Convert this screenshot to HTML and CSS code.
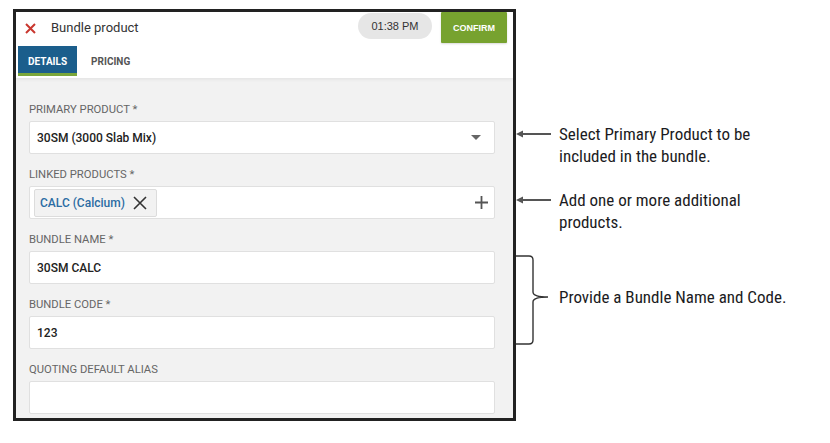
FILE: index.html
```html
<!DOCTYPE html>
<html lang="en">
<head>
<meta charset="utf-8">
<title>Bundle product</title>
<link rel="stylesheet" href="styles.css">
</head>
<body>
<div class="page">
  <div class="window">
    <header class="win-head">
      <div class="title-row">
        <svg class="close-icon" width="11" height="11" viewBox="0 0 11 11"><path d="M1 1 L10 10 M10 1 L1 10" stroke="#c9372f" stroke-width="2" fill="none"/></svg>
        <span class="title">Bundle product</span>
        <span class="time">01:38 PM</span>
        <button class="confirm">CONFIRM</button>
      </div>
      <nav class="tabs">
        <span class="tab active">DETAILS</span>
        <span class="tab">PRICING</span>
      </nav>
    </header>
    <main class="form">
      <div class="field">
        <div class="label">PRIMARY PRODUCT *</div>
        <div class="input select">
          <span class="value">30SM (3000 Slab Mix)</span>
          <svg class="caret" width="10" height="5" viewBox="0 0 10 5"><path d="M0 0 H10 L5 5 Z" fill="#666"/></svg>
        </div>
      </div>
      <div class="field">
        <div class="label">LINKED PRODUCTS *</div>
        <div class="input chips">
          <span class="chip">CALC (Calcium)
            <svg class="chip-x" width="14" height="14" viewBox="0 0 14 14"><path d="M1 1 L13 13 M13 1 L1 13" stroke="#333" stroke-width="1.6" fill="none"/></svg>
          </span>
          <svg class="plus" width="13" height="13" viewBox="0 0 13 13"><path d="M6.5 0 V13 M0 6.5 H13" stroke="#555" stroke-width="1.8" fill="none"/></svg>
        </div>
      </div>
      <div class="field">
        <div class="label">BUNDLE NAME *</div>
        <div class="input"><span class="value">30SM CALC</span></div>
      </div>
      <div class="field">
        <div class="label">BUNDLE CODE *</div>
        <div class="input"><span class="value">123</span></div>
      </div>
      <div class="field">
        <div class="label">QUOTING DEFAULT ALIAS</div>
        <div class="input"></div>
      </div>
    </main>
  </div>
  <aside class="notes">
    <div class="note">
      <svg class="arrow" width="35" height="22" viewBox="0 0 35 22"><path d="M5 11 H35" stroke="#555" stroke-width="2"/><path d="M0 11 L7 7.5 L7 14.5 Z" fill="#555"/></svg>
      <p class="note-text">Select Primary Product to be<br>included in the bundle.</p>
    </div>
    <div class="note">
      <svg class="arrow" width="35" height="22" viewBox="0 0 35 22"><path d="M5 11 H35" stroke="#555" stroke-width="2"/><path d="M0 11 L7 7.5 L7 14.5 Z" fill="#555"/></svg>
      <p class="note-text">Add one or more additional<br>products.</p>
    </div>
    <div class="note">
      <svg class="brace" width="35" height="90" viewBox="0 0 35 90"><path d="M0 1 H13 Q17 1 17 5 V37 Q17 42 32 42 Q17 42 17 47 V85 Q17 89 13 89 H0" stroke="#333" stroke-width="1.4" fill="none"/></svg>
      <p class="note-text brace-text">Provide a Bundle Name and Code.</p>
    </div>
  </aside>
</div>
</body>
</html>
```

FILE: styles.css
```css
html, body {
  margin: 0;
  background: #fff;
  font-family: Roboto, "Liberation Sans", sans-serif;
}

.page {
  display: flex;
  align-items: flex-start;
  padding: 9px 0 0 13px;
}

.window {
  width: 503px;
  height: 412px;
  box-sizing: border-box;
  border: 3px solid #222;
  background: #f2f2f2;
  display: flex;
  flex-direction: column;
  overflow: hidden;
}

.win-head {
  background: #fff;
  height: 66px;
  flex: none;
  box-shadow: 0 1px 4px rgba(0, 0, 0, 0.08);
  position: relative;
  z-index: 1;
}

.title-row {
  display: flex;
  align-items: flex-start;
  height: 34px;
  padding: 0 6px 0 9px;
}

.close-icon {
  margin-top: 11px;
  margin-right: 15px;
  flex: none;
}

.title {
  font-size: 13px;
  line-height: 16px;
  margin-top: 8px;
  color: #333;
}

.time {
  margin-left: auto;
  margin-top: 1px;
  margin-right: 9px;
  width: 74px;
  height: 26px;
  border-radius: 13px;
  background: #e6e6e6;
  color: #333;
  font-family: "Liberation Sans", Arial, sans-serif;
  font-size: 11px;
  display: flex;
  align-items: center;
  justify-content: center;
}

.confirm {
  width: 66px;
  height: 31px;
  border: none;
  border-radius: 1px;
  background: #77a22f;
  color: #fff;
  font-family: "Liberation Sans", Arial, sans-serif;
  font-weight: bold;
  font-size: 9px;
  padding: 0;
  box-shadow: 0 1px 2px rgba(0, 0, 0, 0.15);
}

.tabs {
  display: flex;
  gap: 4px;
  padding-left: 2px;
  height: 32px;
}

.tab {
  height: 30px;
  box-sizing: border-box;
  padding: 0 10px;
  display: flex;
  align-items: center;
  font-size: 10px;
  font-weight: bold;
  color: #555;
}

.tab.active {
  background: #1b5e8c;
  color: #fff;
  border-bottom: 3px solid #7aa63a;
  padding-top: 3px;
}

.form {
  display: flex;
  flex-direction: column;
  gap: 14px;
  padding: 25px 18px 0 13px;
}

.label {
  font-size: 11.25px;
  line-height: 14px;
  color: #666;
  margin-bottom: 4px;
}

.input {
  height: 33px;
  box-sizing: border-box;
  background: #fff;
  border: 1px solid #e0e0e0;
  border-radius: 2px;
  display: flex;
  align-items: center;
  padding: 0 8px 0 7px;
}

.value {
  font-size: 12px;
  font-weight: 500;
  color: #222;
}

.select {
  justify-content: space-between;
  padding-right: 13px;
}

.chips {
  justify-content: space-between;
  padding: 0 6px 0 4px;
}

.chip {
  height: 28px;
  box-sizing: border-box;
  display: flex;
  align-items: center;
  gap: 8px;
  padding: 0 9px 0 5px;
  background: #f2f2f2;
  border: 1px solid #dcdcdc;
  border-radius: 2px;
  font-size: 12px;
  font-weight: 500;
  color: #2b6ca3;
}

.notes {
  display: flex;
  flex-direction: column;
  padding-top: 114px;
}

.note {
  display: flex;
  align-items: flex-start;
  gap: 8px;
}

.note + .note {
  margin-top: 22px;
}

.arrow, .brace {
  flex: none;
}

.note-text {
  margin: 0;
  font-family: "Roboto Condensed", "Liberation Sans Narrow", "Arial Narrow", Roboto, sans-serif;
  font-size: 17px;
  line-height: 22px;
  color: #1b1b22;
}

.brace-text {
  margin-top: 31px;
}
```
